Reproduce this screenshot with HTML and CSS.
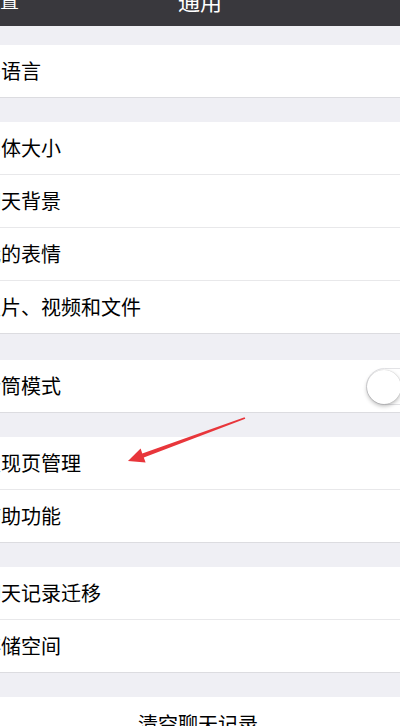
FILE: index.html
```html
<!DOCTYPE html>
<html lang="zh-CN">
<head>
<meta charset="utf-8">
<title>通用</title>
<link rel="stylesheet" href="styles.css">
</head>
<body>
<div class="page">
  <header class="nav">
    <span class="nav-back">设置</span>
    <span class="nav-title">通用</span>
    <span class="nav-side"></span>
  </header>

  <section class="group first">
    <div class="row"><span class="label">多语言</span></div>
  </section>

  <section class="group">
    <div class="row"><span class="label">字体大小</span></div>
    <div class="row"><span class="label">聊天背景</span></div>
    <div class="row"><span class="label">我的表情</span></div>
    <div class="row"><span class="label">照片、视频和文件</span></div>
  </section>

  <section class="group wide">
    <div class="row">
      <span class="label">听筒模式</span>
      <span class="switch"><span class="knob"></span></span>
    </div>
  </section>

  <section class="group">
    <div class="row"><span class="label">发现页管理</span></div>
    <div class="row"><span class="label">辅助功能</span></div>
  </section>

  <section class="group">
    <div class="row"><span class="label">聊天记录迁移</span></div>
    <div class="row"><span class="label">存储空间</span></div>
  </section>

  <section class="group">
    <div class="row center"><span class="action">清空聊天记录</span></div>
  </section>

  <svg class="arrow" width="400" height="726" viewBox="0 0 400 726" aria-hidden="true">
    <polygon points="128,461 140.6,448.6 142.3,453.4 244.6,417.3 245.3,418.7 143.8,457.6 145.6,462.5" fill="#e8363b"/>
  </svg>
</div>
</body>
</html>
```

FILE: styles.css
```css
html, body {
  margin: 0;
  padding: 0;
}

body {
  width: 400px;
  height: 726px;
  overflow: hidden;
  background: #efeff4;
  font-family: "Noto Sans CJK SC", "Noto Sans", sans-serif;
  color: #000;
}

.page {
  position: relative;
  width: 400px;
  height: 726px;
  overflow: hidden;
}

.nav {
  height: 26px;
  background: #39383d;
  display: grid;
  grid-template-columns: 1fr auto 1fr;
  align-items: start;
  color: #fff;
}

.nav-back {
  font-size: 19px;
  line-height: 19px;
  margin-top: -10px;
  margin-left: -19px;
  white-space: nowrap;
}

.nav-title {
  font-size: 22px;
  line-height: 22px;
  margin-top: -11px;
}

.group {
  background: #fff;
  margin-top: 24px;
  border-bottom: 1px solid #dcdce0;
}

.group.first {
  margin-top: 19px;
}

.group.wide {
  margin-top: 26px;
}

.row {
  height: 52px;
  display: flex;
  align-items: center;
  justify-content: space-between;
  font-size: 20px;
}

.row + .row {
  border-top: 1px solid #e8e8ea;
}

.label {
  margin-left: -19px;
  white-space: nowrap;
  line-height: 1;
}

.row.center {
  justify-content: center;
}

.action {
  font-size: 20px;
  line-height: 1;
  margin-left: -4px;
  margin-top: 2px;
}

.switch {
  flex-shrink: 0;
  width: 62px;
  height: 37px;
  box-sizing: border-box;
  border: 1.5px solid #e3e3e6;
  border-radius: 19px;
  background: #fff;
  margin-right: -28px;
  margin-top: 1px;
  display: flex;
  align-items: center;
}

.knob {
  width: 34px;
  height: 34px;
  border-radius: 50%;
  background: #fff;
  box-shadow: 0 2px 4px rgba(0, 0, 0, 0.28), 0 0 1px rgba(0, 0, 0, 0.25);
}

.arrow {
  position: absolute;
  top: 0;
  left: 0;
  pointer-events: none;
}
```
